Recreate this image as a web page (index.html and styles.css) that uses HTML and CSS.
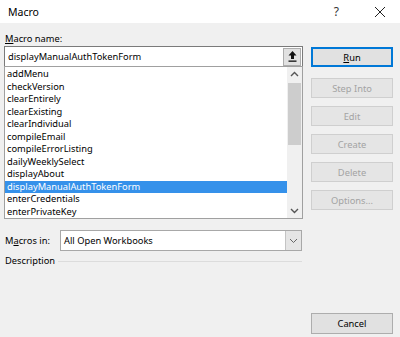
FILE: index.html
```html
<!DOCTYPE html>
<html lang="en">
<head>
    <meta charset="UTF-8">
    <title>Macro</title>
    <link rel="stylesheet" href="styles.css">
</head>
<body>
    <div class="dialog">
        <div class="titlebar">
            <span class="title">Macro</span>
            <span class="help">?</span>
            <svg class="close" width="12" height="12" viewBox="0 0 12 12">
                <path d="M1 1 L11 11 M11 1 L1 11" stroke="#222" stroke-width="1" fill="none"/>
            </svg>
        </div>
        <div class="main">
            <div class="left">
                <div class="field-label"><u>M</u>acro name:</div>
                <div class="name-box">
                    <span class="name-text">displayManualAuthTokenForm</span>
                    <span class="upload">
                        <svg width="9" height="11" viewBox="0 0 9 11">
                            <path d="M4.5 0 L8.5 4.5 L6 4.5 L6 8 L3 8 L3 4.5 L0.5 4.5 Z" fill="#111"/>
                            <rect x="0.5" y="9.5" width="8" height="1.3" fill="#111"/>
                        </svg>
                    </span>
                </div>
                <div class="list">
                    <div class="items">
                        <div class="item">addMenu</div>
                        <div class="item">checkVersion</div>
                        <div class="item">clearEntirely</div>
                        <div class="item">clearExisting</div>
                        <div class="item">clearIndividual</div>
                        <div class="item">compileEmail</div>
                        <div class="item">compileErrorListing</div>
                        <div class="item">dailyWeeklySelect</div>
                        <div class="item">displayAbout</div>
                        <div class="item selected">displayManualAuthTokenForm</div>
                        <div class="item">enterCredentials</div>
                        <div class="item">enterPrivateKey</div>
                    </div>
                    <div class="scrollbar">
                        <svg class="arrow" width="15" height="15" viewBox="0 0 15 15">
                            <path d="M4 9 L7.5 5.5 L11 9" stroke="#555" stroke-width="1.4" fill="none"/>
                        </svg>
                        <div class="track"><div class="thumb"></div></div>
                        <svg class="arrow" width="15" height="15" viewBox="0 0 15 15">
                            <path d="M4 6 L7.5 9.5 L11 6" stroke="#555" stroke-width="1.4" fill="none"/>
                        </svg>
                    </div>
                </div>
                <div class="macros-in">
                    <span class="in-label">M<u>a</u>cros in:</span>
                    <div class="select">
                        <span class="select-text">All Open Workbooks</span>
                        <span class="drop">
                            <svg width="9" height="6" viewBox="0 0 9 6">
                                <path d="M1 1 L4.5 4.5 L8 1" stroke="#666" stroke-width="1" fill="none"/>
                            </svg>
                        </span>
                    </div>
                </div>
                <div class="description">
                    <span>Description</span>
                    <span class="rule"></span>
                </div>
            </div>
            <div class="right">
                <button class="btn default"><u>R</u>un</button>
                <button class="btn disabled first">Step Into</button>
                <button class="btn disabled">Edit</button>
                <button class="btn disabled">Create</button>
                <button class="btn disabled">Delete</button>
                <button class="btn disabled">Options...</button>
                <button class="btn cancel">Cancel</button>
            </div>
        </div>
    </div>
</body>
</html>
```

FILE: styles.css
```css
* {
    box-sizing: border-box;
}
body {
    margin: 0;
    font-family: "Noto Sans", "Open Sans", sans-serif;
    font-size: 9.3px;
    color: #000;
}
.dialog {
    width: 400px;
    height: 337px;
    background: #f0f0f0;
    display: flex;
    flex-direction: column;
    overflow: hidden;
}
.titlebar {
    height: 23px;
    background: #fff;
    display: flex;
    align-items: center;
    padding-left: 8px;
}
.title {
    font-size: 10.5px;
    flex: 1;
}
.help {
    font-size: 12px;
    color: #333;
    margin-right: 35px;
}
.close {
    margin-right: 14px;
}
.main {
    flex: 1;
    display: flex;
    padding: 0 6px 3px 4px;
    gap: 8px;
}
.left {
    width: 299px;
    display: flex;
    flex-direction: column;
}
.field-label {
    padding-top: 9px;
    line-height: 14px;
    padding-left: 1px;
}
.name-box {
    height: 21px;
    background: #fff;
    border: 1px solid #7a7a7a;
    display: flex;
    align-items: center;
    padding-left: 3px;
}
.name-text {
    flex: 1;
}
.upload {
    width: 18px;
    height: 18px;
    margin-right: 1px;
    background: #e1e1e1;
    border: 1px solid #adadad;
    display: flex;
    align-items: center;
    justify-content: center;
}
.list {
    height: 153px;
    margin-top: -1px;
    background: #fff;
    border: 1px solid #a0a0a0;
    display: flex;
    padding-top: 1px;
}
.items {
    flex: 1;
}
.item {
    height: 12.5px;
    line-height: 12.5px;
    padding-left: 2px;
    white-space: nowrap;
}
.item.selected {
    background: #3591ea;
    color: #fff;
}
.scrollbar {
    width: 15px;
    margin-top: -1px;
    background: #f0f0f0;
    display: flex;
    flex-direction: column;
}
.arrow {
    display: block;
}
.track {
    flex: 1;
    padding: 1px;
}
.thumb {
    height: 62px;
    background: #cdcdcd;
}
.macros-in {
    margin-top: 11px;
    display: flex;
    align-items: center;
}
.in-label {
    width: 56px;
    padding-left: 1px;
}
.select {
    width: 242px;
    height: 21px;
    background: #fff;
    border: 1px solid #a8a8a8;
    display: flex;
    align-items: center;
    padding-left: 3px;
}
.select-text {
    flex: 1;
}
.drop {
    width: 16px;
    height: 19px;
    background: #e5e5e5;
    border-left: 1px solid #c4c4c4;
    display: flex;
    align-items: center;
    justify-content: center;
}
.description {
    margin-top: 3px;
    display: flex;
    align-items: center;
    gap: 3px;
    line-height: 14px;
    padding-left: 1px;
}
.rule {
    flex: 1;
    height: 1px;
    background: #dcdcdc;
    margin-right: 1px;
}
.right {
    width: 82px;
    display: flex;
    flex-direction: column;
    padding-top: 24px;
}
.btn {
    font-family: inherit;
    font-size: 9.3px;
    height: 20px;
    margin: 0 0 8px 0;
    padding: 0;
    background: #e1e1e1;
    border: 1px solid #adadad;
    color: #000;
}
.btn.default {
    border: 2px solid #0078d7;
    margin-bottom: 11px;
}
.btn.disabled {
    background: #e5e5e5;
    border-color: #cfcfcf;
    color: #a3a3a3;
}
.btn.cancel {
    margin-top: auto;
    margin-bottom: 0;
    height: 21px;
}
```
